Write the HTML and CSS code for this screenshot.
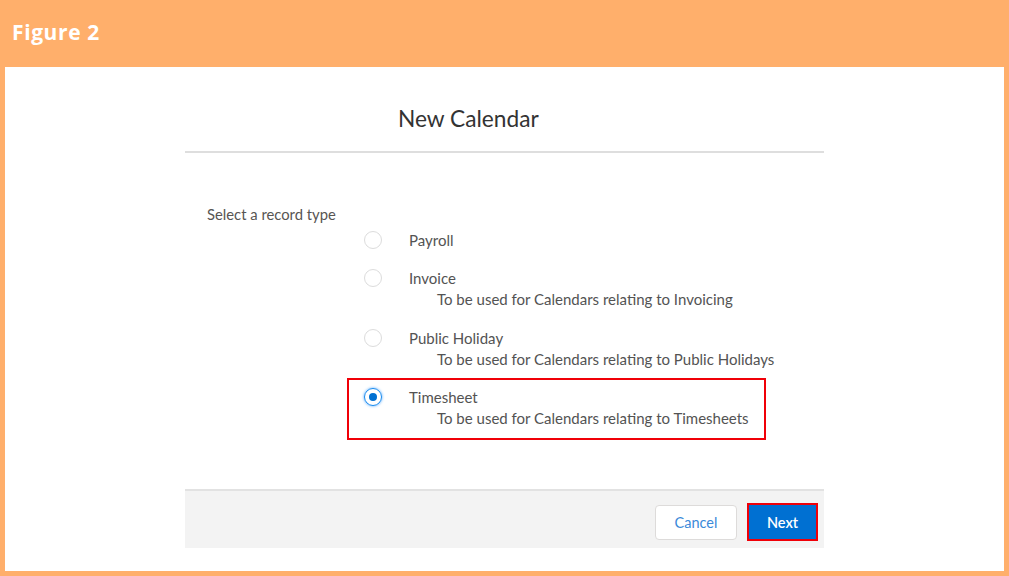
FILE: index.html
```html
<!DOCTYPE html>
<html>
<head>
<meta charset="utf-8">
<link rel="stylesheet" href="styles.css">
</head>
<body>
<div class="frame">
  <div class="fig-head">Figure 2</div>
  <div class="panel">
    <div class="modal">
      <div class="modal-header">New Calendar</div>
      <div class="modal-body">
        <div class="prompt">Select a record type</div>
        <div class="options">
          <div class="option">
            <span class="radio"></span>
            <div class="texts"><div class="label">Payroll</div></div>
          </div>
          <div class="option">
            <span class="radio"></span>
            <div class="texts"><div class="label">Invoice</div><div class="desc">To be used for Calendars relating to Invoicing</div></div>
          </div>
          <div class="option">
            <span class="radio"></span>
            <div class="texts"><div class="label">Public Holiday</div><div class="desc">To be used for Calendars relating to Public Holidays</div></div>
          </div>
          <div class="option option-highlight">
            <span class="radio radio-checked"></span>
            <div class="texts"><div class="label">Timesheet</div><div class="desc">To be used for Calendars relating to Timesheets</div></div>
          </div>
        </div>
      </div>
      <div class="modal-footer">
        <button class="btn btn-neutral">Cancel</button>
        <button class="btn btn-brand">Next</button>
      </div>
    </div>
  </div>
</div>
</body>
</html>
```

FILE: styles.css
```css
html, body {
  margin: 0;
  padding: 0;
}
body {
  width: 1009px;
  height: 576px;
  background: #ffaf6b;
  overflow: hidden;
}
.frame {
  display: flex;
  flex-direction: column;
  height: 576px;
}
.fig-head {
  height: 67px;
  box-sizing: border-box;
  padding: 18px 0 0 12px;
  color: #ffffff;
  font-family: "Open Sans", "Noto Sans", sans-serif;
  font-weight: 700;
  font-size: 21px;
  letter-spacing: 0.6px;
  line-height: 29px;
}
.panel {
  height: 504px;
  margin: 0 5px 5px 5px;
  background: #ffffff;
}
.modal {
  width: 639px;
  margin-left: 180px;
  font-family: Lato, "Open Sans", sans-serif;
  color: #3e3e3c;
}
.modal-header {
  padding: 40px 0 20px 213px;
  line-height: 24px;
  font-size: 22.7px;
  text-align: left;
  color: #333333;
  border-bottom: 2px solid #dedede;
}
.modal-body {
  padding: 52px 0 60px 22px;
}
.prompt {
  font-size: 14.8px;
  line-height: 18px;
  color: #575553;
}
.options {
  margin: 6.5px 0 0 157px;
  display: flex;
  flex-direction: column;
  gap: 17.5px;
}
.option {
  display: flex;
  align-items: flex-start;
  position: relative;
}
.radio {
  width: 18px;
  height: 18px;
  box-sizing: border-box;
  border: 1px solid #dcdcdc;
  border-radius: 50%;
  margin-top: 1px;
  flex: none;
  display: flex;
  align-items: center;
  justify-content: center;
}
.radio-checked {
  border-color: #1589ee;
  box-shadow: 0 0 3px #4aa3ff;
}
.radio-checked::before {
  content: "";
  width: 8px;
  height: 8px;
  border-radius: 50%;
  background: #0070d2;
}
.texts {
  margin-left: 27px;
  font-size: 15px;
  line-height: 21px;
  color: #535353;
}
.desc {
  padding-left: 28px;
}
.option-highlight::after {
  content: "";
  position: absolute;
  left: -17px;
  top: -9px;
  width: 419px;
  height: 62px;
  box-sizing: border-box;
  border: 2px solid #f00008;
}
.modal-footer {
  box-sizing: border-box;
  height: 59px;
  padding: 5px 6px 0 0;
  background: #f3f3f3;
  border-top: 2px solid #e2e2e2;
  display: flex;
  justify-content: flex-end;
  align-items: center;
  gap: 10px;
}
.btn {
  font-family: Lato, "Open Sans", sans-serif;
  font-size: 14.5px;
  border-radius: 4px;
  padding: 0;
  cursor: pointer;
}
.btn-neutral {
  width: 82px;
  height: 35px;
  background: #ffffff;
  border: 1px solid #dddbda;
  color: #3b8ad9;
}
.btn-brand {
  width: 71px;
  height: 38px;
  background: #0070d2;
  border: 2px solid #f00008;
  border-radius: 0;
  color: #ffffff;
  font-weight: 600;
}
```
